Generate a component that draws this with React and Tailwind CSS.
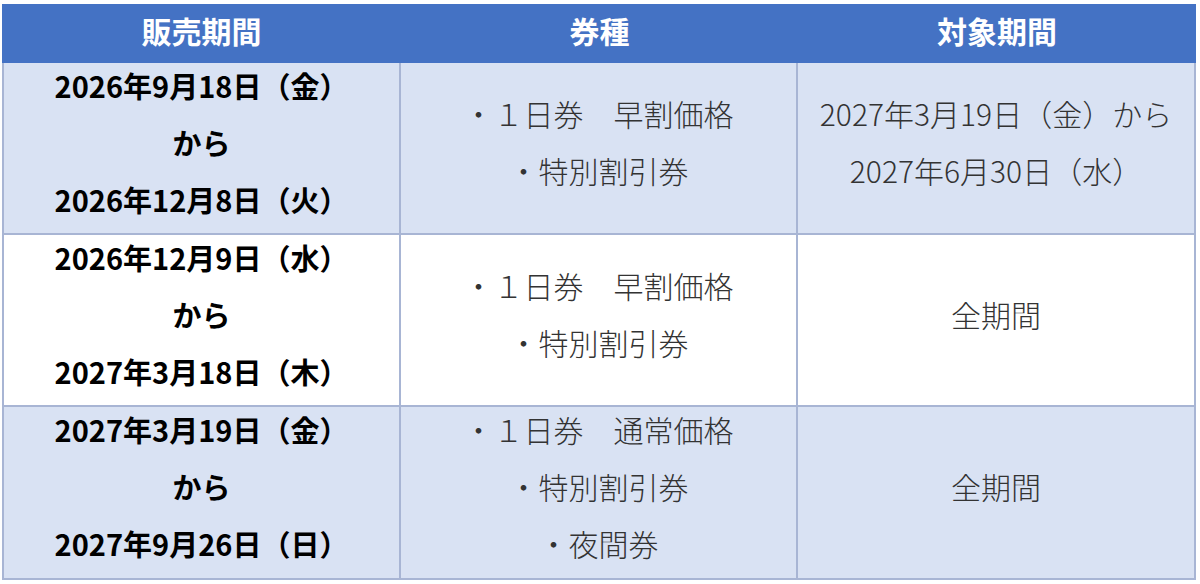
import React from "react";

const rows = [
  {
    bg: "bg-[#d9e2f3]",
    period: ["2026年9月18日（金）", "から", "2026年12月8日（火）"],
    tickets: ["・１日券　早割価格", "・特別割引券"],
    target: ["2027年3月19日（金）から", "2027年6月30日（水）"],
  },
  {
    bg: "bg-white",
    period: ["2026年12月9日（水）", "から", "2027年3月18日（木）"],
    tickets: ["・１日券　早割価格", "・特別割引券"],
    target: ["全期間"],
  },
  {
    bg: "bg-[#d9e2f3]",
    period: ["2027年3月19日（金）", "から", "2027年9月26日（日）"],
    tickets: ["・１日券　通常価格", "・特別割引券", "・夜間券"],
    target: ["全期間"],
  },
];

const Cell = ({ lines, className }) => (
  <div className={`flex items-center justify-center border-r-2 border-b-2 border-[#a8b5d4] ${className}`}>
    <div className="-translate-y-[6px] text-center leading-[57px] whitespace-nowrap">
      {lines.map((t, j) => (
        <div key={j}>{t}</div>
      ))}
    </div>
  </div>
);

const App = () => {
  return (
    <div
      className="w-[1200px] h-[584px] bg-white pt-[4px] pl-[2px]"
      style={{ fontFamily: '"Noto Sans CJK JP", "Noto Sans", sans-serif' }}
    >
      <div className="grid w-[1194px] grid-cols-[399px_397px_398px] grid-rows-[59px_172px_172px_173px]">
        {/* ヘッダー */}
        {["販売期間", "券種", "対象期間"].map((h) => (
          <div key={h} className="flex items-center justify-center bg-[#4472c4] text-[30px] font-bold text-white">
            <span className="-translate-y-[4px] leading-none">{h}</span>
          </div>
        ))}

        {rows.map((row, i) => (
          <React.Fragment key={i}>
            <Cell
              lines={row.period}
              className={`${row.bg} border-l-2 text-[29px] font-bold text-black`}
            />
            <Cell
              lines={row.tickets}
              className={`${row.bg} text-[30px] font-light text-[#333]`}
            />
            <Cell
              lines={row.target}
              className={`${row.bg} text-[30px] font-light text-[#333]`}
            />
          </React.Fragment>
        ))}
      </div>
    </div>
  );
};

export default App;
